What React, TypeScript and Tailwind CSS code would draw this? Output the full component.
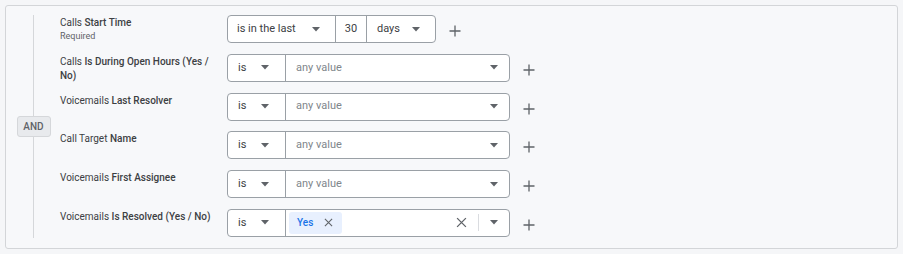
import React from 'react';

const font = { fontFamily: 'Roboto, "Noto Sans", sans-serif' };

const Caret = () => (
    <svg width="8" height="5" viewBox="0 0 8 5" className="shrink-0">
        <path d="M0 0 L8 0 L4 4.5 Z" fill="#5f6368" />
    </svg>
);

const Plus = () => (
    <svg width="12" height="12" viewBox="0 0 12 12" className="shrink-0">
        <path d="M6 0.5 V11.5 M0.5 6 H11.5" stroke="#5f6368" strokeWidth="1.3" />
    </svg>
);

const Cross = ({ size = 10, color = '#5f6368' }: { size?: number; color?: string }) => (
    <svg width={size} height={size} viewBox="0 0 10 10" className="shrink-0">
        <path d="M1 1 L9 9 M9 1 L1 9" stroke={color} strokeWidth="1.2" />
    </svg>
);

interface FilterRow {
    view: string;
    field: string;
    required?: boolean;
}

const rows: FilterRow[] = [
    { view: 'Calls', field: 'Start Time', required: true },
    { view: 'Calls', field: 'Is During Open Hours (Yes / No)' },
    { view: 'Voicemails', field: 'Last Resolver' },
    { view: 'Call Target', field: 'Name' },
    { view: 'Voicemails', field: 'First Assignee' },
    { view: 'Voicemails', field: 'Is Resolved (Yes / No)' },
];

const Label = ({ row }: { row: FilterRow }) => (
    <div className="w-[158px] shrink-0 pt-[1px] text-[10px] leading-[14px] text-[#3c4043]">
        <div className="font-medium">
            <span className="font-normal">{row.view}</span>
            {row.field.split(' ').map((word, i) => (
                <React.Fragment key={i}>
                    {' '}
                    <span>{word}</span>
                </React.Fragment>
            ))}
        </div>
        {row.required && <div className="text-[9px] leading-[13px] text-[#5f6368]">Required</div>}
    </div>
);

const IsSelect = () => (
    <div className="flex h-full w-[58px] items-center justify-between pl-[10px] pr-[16px] border-r border-[#9aa0a6]">
        <span>is</span>
        <Caret />
    </div>
);

const Control = ({ index }: { index: number }) => {
    if (index === 0) {
        return (
            <div className="flex items-center">
                <div className="flex h-[28px] items-center rounded-[4px] border border-[#9aa0a6] bg-white text-[11px] text-[#3c4043]">
                    <div className="flex h-full w-[108px] items-center justify-between pl-[9px] pr-[15px] border-r border-[#9aa0a6]">
                        <span>is in the last</span>
                        <Caret />
                    </div>
                    <div className="flex h-full w-[31px] items-center justify-center border-r border-[#9aa0a6]">30</div>
                    <div className="flex h-full w-[68px] items-center justify-between pl-[10px] pr-[15px]">
                        <span>days</span>
                        <Caret />
                    </div>
                </div>
                <div className="ml-[13px] mt-[4px]">
                    <Plus />
                </div>
            </div>
        );
    }
    const resolved = index === 5;
    return (
        <div className="flex items-center">
            <div className="flex h-[28px] w-[283px] items-center rounded-[4px] border border-[#9aa0a6] bg-white text-[11px] text-[#3c4043]">
                <IsSelect />
                {resolved ? (
                    <div className="flex h-full flex-1 items-center pl-[3px] pr-[11px]">
                        <div className="flex h-[22px] w-[53px] items-center gap-[11px] rounded-[3px] bg-[#e8f0fe] pl-[8px]">
                            <span className="text-[10px] font-medium text-[#1a73e8]">Yes</span>
                            <Cross size={9} />
                        </div>
                        <div className="flex-1" />
                        <Cross size={11} />
                        <div className="mx-[11px] h-[17px] w-px bg-[#dadce0]" />
                        <Caret />
                    </div>
                ) : (
                    <div className="flex h-full flex-1 items-center justify-between pl-[10px] pr-[11px]">
                        <span className="text-[#80868b]">any value</span>
                        <Caret />
                    </div>
                )}
            </div>
            <div className="ml-[13px] mt-[4px]">
                <Plus />
            </div>
        </div>
    );
};

export default function App() {
    return (
        <div className="min-h-screen bg-[#f5f6f8] p-[5px]" style={font}>
            <div className="flex h-[244px] w-[893px] rounded-[3px] border border-[#d3d5d8] bg-[#f7f8fa]">
                {/* AND connector */}
                <div className="flex w-[54px] shrink-0 flex-col items-center pl-[1px] pt-[9px] pb-[10px]">
                    <div className="w-px flex-1 bg-[#d5d7da]" />
                    <div className="flex h-[21px] w-[34px] items-center justify-center rounded-[3px] border border-[#d5d7da] bg-[#e8eaed] text-[10px] font-medium text-[#5f6368]">
                        AND
                    </div>
                    <div className="w-px flex-1 bg-[#d5d7da]" />
                </div>

                {/* Filter rows */}
                <div className="flex flex-col gap-[10.8px] pt-[9px]">
                    {rows.map((row, i) => (
                        <div key={i} className="flex h-[28px] gap-[9px]">
                            <Label row={row} />
                            <Control index={i} />
                        </div>
                    ))}
                </div>
            </div>
        </div>
    );
}
